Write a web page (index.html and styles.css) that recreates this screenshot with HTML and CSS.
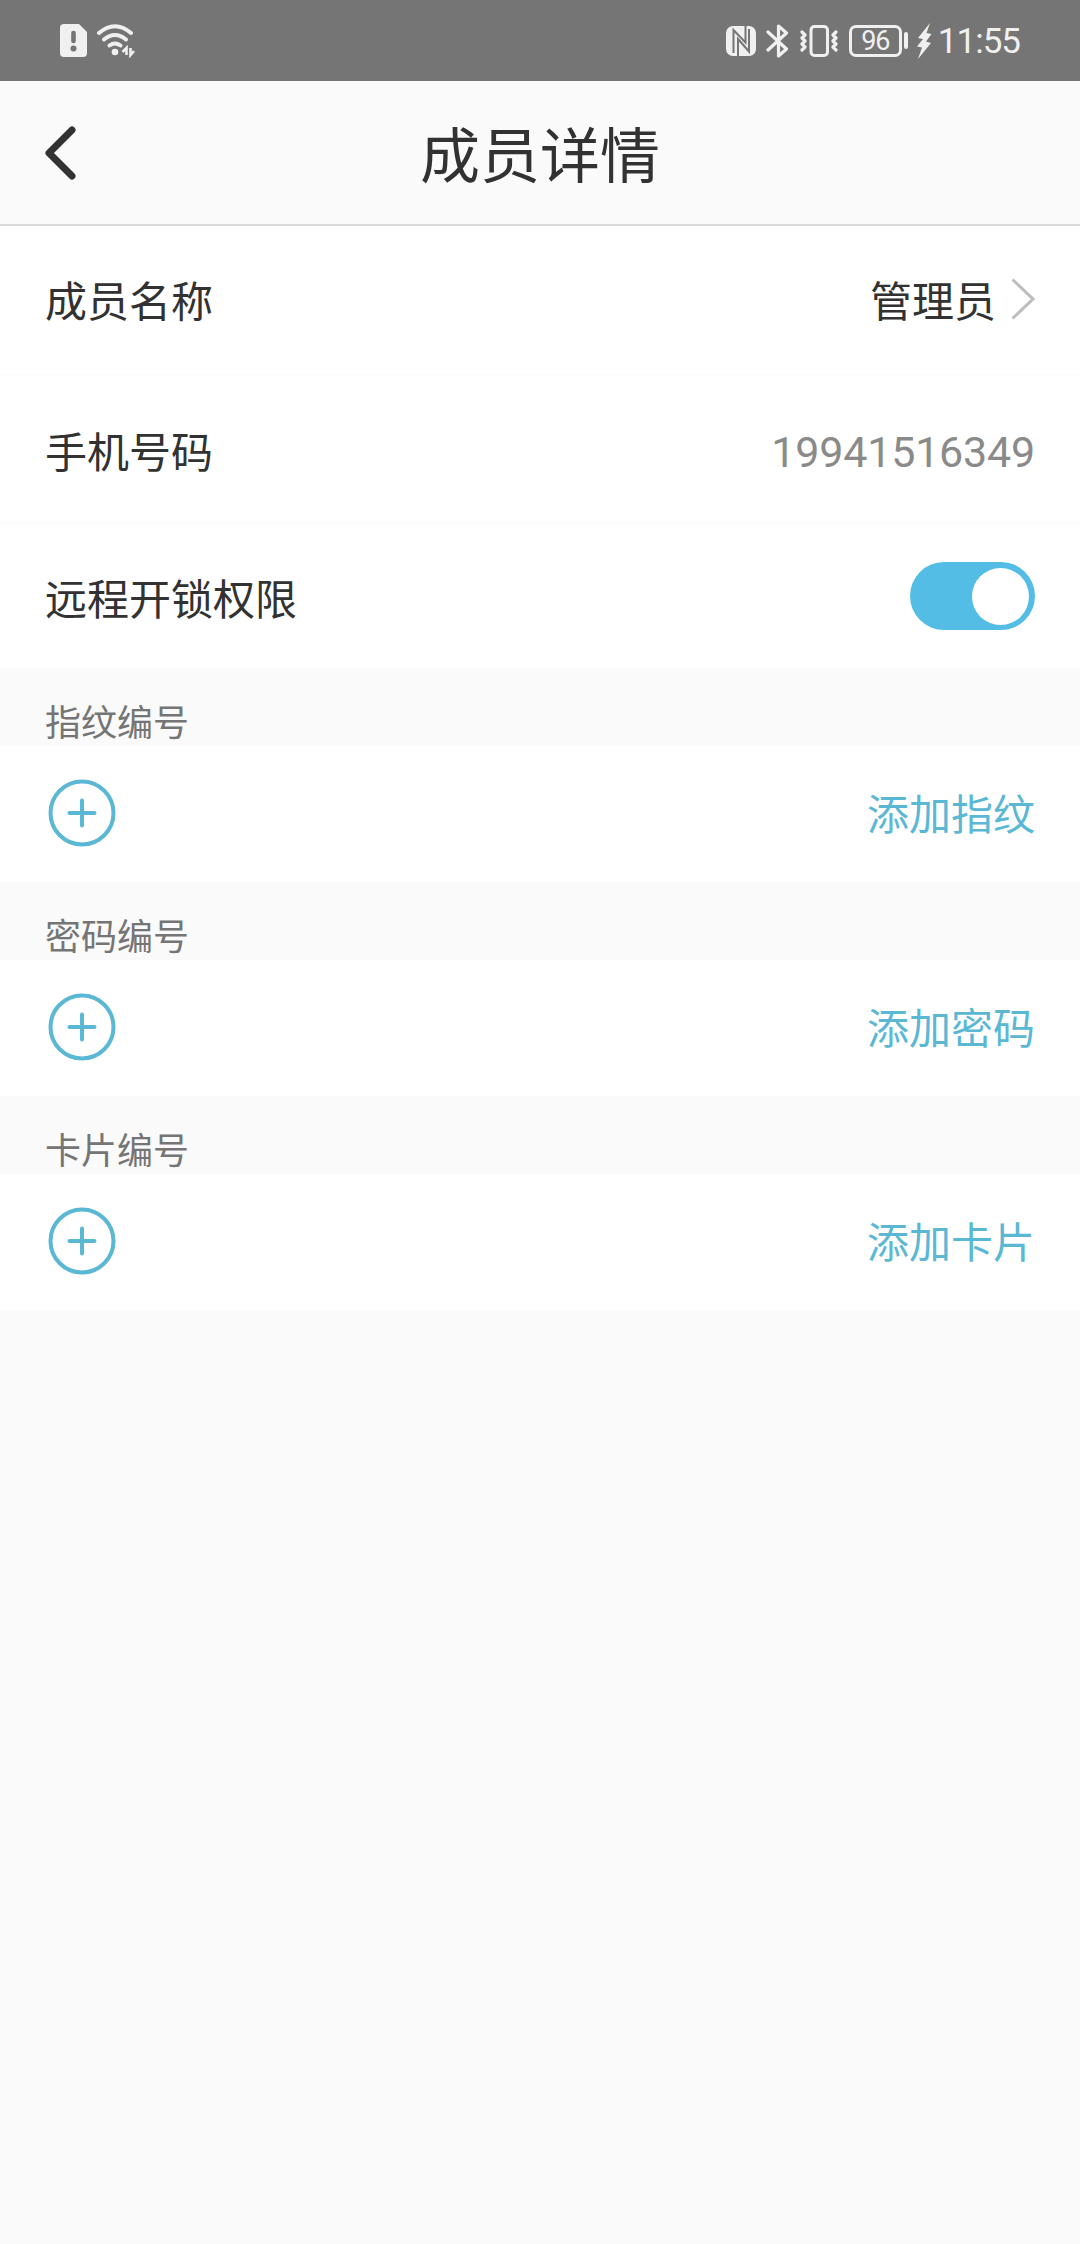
FILE: index.html
```html
<!DOCTYPE html>
<html lang="zh-CN">

<head>
    <meta charset="UTF-8">
    <title>成员详情</title>
    <link rel="stylesheet" href="styles.css">
</head>

<body>
    <!--状态栏-->
    <div class="status">
        <div class="status-left">
            <svg class="sim" width="27" height="34" viewBox="0 0 27 34">
                <path d="M4 0H19L27 8V29Q27 33 23 33H4Q0 33 0 29V4Q0 0 4 0Z" fill="#f0f0f0"/>
                <path d="M13.5 9V17" stroke="#757575" stroke-width="4.6" stroke-linecap="round"/>
                <circle cx="13.5" cy="24.5" r="3" fill="#757575"/>
            </svg>
            <svg class="wifi" width="40" height="34" viewBox="0 0 40 34">
                <g fill="none" stroke="#f0f0f0" stroke-width="4" stroke-linecap="round">
                    <path d="M3 9Q19 -4.500 35 9"/>
                    <path d="M8 15.500Q19 6.500 30 15.500"/>
                    <path d="M13.500 21.500Q19 17.500 24.500 21.500"/>
                </g>
                <circle cx="19" cy="28" r="3.300" fill="#f0f0f0"/>
                <path d="M26.500 28L30.500 24V31M34.500 24V31L38 27" fill="none" stroke="#f0f0f0" stroke-width="2.600"/>
            </svg>
        </div>
        <div class="status-right">
            <svg class="nfc" width="30" height="30" viewBox="0 0 30 30">
                <rect width="30" height="30" rx="7" fill="#f0f0f0"/>
                <path d="M7.500 27V4L19.500 16.500V0M12 30V13L23 25.500V3" fill="none" stroke="#757575" stroke-width="2"/>
            </svg>
            <svg class="bluetooth" width="24" height="34" viewBox="0 0 24 34">
                <path d="M2 8L20.500 25L12.500 32V2L20.500 9L2 26" fill="none" stroke="#f0f0f0" stroke-width="3.200" stroke-linecap="round" stroke-linejoin="round"/>
            </svg>
            <svg class="vibrate" width="38" height="32" viewBox="0 0 38 32">
                <rect x="11" y="1.500" width="16.500" height="29" rx="3.500" fill="none" stroke="#f0f0f0" stroke-width="3"/>
                <path d="M2 7L5 10L2 13L5 16L2 19L5 22L2 25M36 7L33 10L36 13L33 16L36 19L33 22L36 25" fill="none" stroke="#f0f0f0" stroke-width="3.200" stroke-linecap="round" stroke-linejoin="round"/>
            </svg>
            <div class="battery">96</div>
            <div class="battery-tip"></div>
            <svg class="charge" width="15" height="36" viewBox="0 0 15 36">
                <path d="M13 0L1 15L6 16L0 23.500L5 24.500L1 36L14 20L9 18.500L14.500 11L9.500 10Z" fill="#f0f0f0"/>
            </svg>
            <div class="time">11:55</div>
        </div>
    </div>

    <!--标题栏-->
    <div class="header">
        <svg class="back" width="31" height="54" viewBox="0 0 31 54">
            <path d="M27 4L4 27L27 50" fill="none" stroke="#323232" stroke-width="7" stroke-linecap="round" stroke-linejoin="round"/>
        </svg>
        <h1>成员详情</h1>
    </div>

    <!--成员信息-->
    <ul class="info">
        <li>
            <span>成员名称</span>
            <span class="name">管理员
                <svg width="24" height="42" viewBox="0 0 24 42">
                    <path d="M1.500 1.500L22 21L1.500 40.500" fill="none" stroke="#bdbdbd" stroke-width="3"/>
                </svg>
            </span>
        </li>
        <li>
            <span>手机号码</span>
            <span class="phone">19941516349</span>
        </li>
        <li>
            <span>远程开锁权限</span>
            <div class="switch"></div>
        </li>
    </ul>

    <!--指纹-->
    <h2>指纹编号</h2>
    <div class="add">
        <svg width="68" height="68" viewBox="0 0 68 68">
            <circle cx="34" cy="34" r="31.500"/>
            <path d="M34 21.500V46.500M21.500 34H46.500"/>
        </svg>
        <a>添加指纹</a>
    </div>

    <!--密码-->
    <h2>密码编号</h2>
    <div class="add">
        <svg width="68" height="68" viewBox="0 0 68 68">
            <circle cx="34" cy="34" r="31.500"/>
            <path d="M34 21.500V46.500M21.500 34H46.500"/>
        </svg>
        <a>添加密码</a>
    </div>

    <!--卡片-->
    <h2>卡片编号</h2>
    <div class="add">
        <svg width="68" height="68" viewBox="0 0 68 68">
            <circle cx="34" cy="34" r="31.500"/>
            <path d="M34 21.500V46.500M21.500 34H46.500"/>
        </svg>
        <a>添加卡片</a>
    </div>
</body>

</html>
```
FILE: styles.css
```css
* {
    margin: 0;
    padding: 0;
    box-sizing: border-box;
}

body {
    width: 1080px;
    min-height: 2244px;
    background: #fafafa;
    color: #323232;
    font-family: Roboto, "Noto Sans CJK SC", sans-serif;
    font-size: 42px;
}

svg {
    display: block;
    flex: none;
}

/* 状态栏 */
.status {
    height: 81px;
    padding: 0 60px;
    background: #757575;
    color: #f0f0f0;
    display: flex;
    justify-content: space-between;
}

.status-left,
.status-right {
    display: flex;
    align-items: center;
}

.wifi {
    margin-left: 9px;
}

.bluetooth {
    margin-left: 10px;
}

.vibrate {
    margin-left: 10px;
}

.battery {
    width: 53px;
    height: 32px;
    margin-left: 11px;
    border: 3px solid #f0f0f0;
    border-radius: 7px;
    font-size: 27px;
    line-height: 27px;
    letter-spacing: -1px;
    text-align: center;
}

.battery-tip {
    width: 4px;
    height: 17px;
    margin-left: 2px;
    border-radius: 2px;
    background: #f0f0f0;
}

.charge {
    margin-left: 9px;
}

.time {
    margin-left: 6px;
    font-size: 35px;
    line-height: 36px;
    letter-spacing: -1px;
    padding-top: 3px;
}

/* 标题栏 */
.header {
    height: 145px;
    border-bottom: 2px solid #dadada;
    display: flex;
    align-items: center;
    padding: 0 45px;
}

.header h1 {
    flex: 1;
    margin-right: 31px;
    padding-top: 10px;
    font-size: 60px;
    font-weight: 400;
    line-height: 80px;
    text-align: center;
}

/* 成员信息 */
.info {
    list-style: none;
    background: #fff;
}

.info li {
    height: 148px;
    padding: 0 45px;
    border-bottom: 2px solid #fcfcfc;
    display: flex;
    justify-content: space-between;
    align-items: center;
}

.info li:first-child {
    height: 150px;
    padding-bottom: 3px;
}

.info li:last-child {
    height: 144px;
    border-bottom: 0;
}

.name {
    display: flex;
    align-items: center;
}

.name svg {
    margin-left: 15px;
}

.phone {
    padding-top: 5px;
    color: #8a8a8a;
    font-size: 43px;
    letter-spacing: -0.2px;
}

.switch {
    width: 125px;
    height: 68px;
    padding: 6px;
    border-radius: 34px;
    background: #53bde5;
}

.switch::after {
    content: "";
    display: block;
    width: 57px;
    height: 57px;
    margin-left: auto;
    border-radius: 50%;
    background: #fff;
}

/* 编号 */
h2 {
    height: 78px;
    padding: 26px 45px 0;
    color: #757575;
    font-size: 36px;
    font-weight: 400;
    line-height: 60px;
}

.add {
    height: 136px;
    padding: 0 45px 3px 48px;
    background: #fff;
    display: flex;
    justify-content: space-between;
    align-items: center;
}

.add svg {
    fill: none;
    stroke: #5bb8d4;
    stroke-width: 4;
    stroke-linecap: round;
}

.add a {
    padding-bottom: 3px;
    color: #5bb8d4;
}
```
